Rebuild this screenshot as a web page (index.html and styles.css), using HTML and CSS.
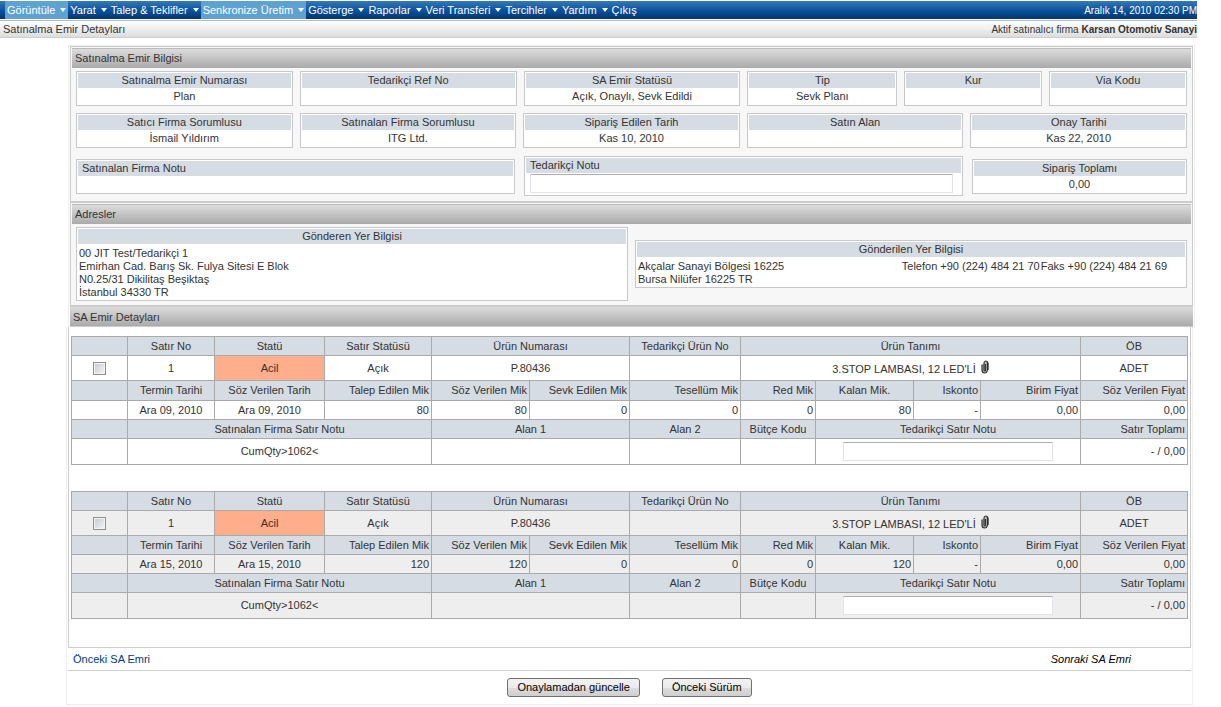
FILE: index.html
```
<!DOCTYPE html>
<html lang="tr">
<head>
<meta charset="utf-8">
<title>Satınalma Emir Detayları</title>
<link rel="stylesheet" href="styles.css">
</head>
<body>
<header class="top">
  <nav class="menu">
    <a class="menu-item active" href="#">Görüntüle<span class="arrow"></span></a>
    <a class="menu-item" href="#">Yarat<span class="arrow"></span></a>
    <a class="menu-item" href="#">Talep &amp; Teklifler<span class="arrow"></span></a>
    <a class="menu-item active" href="#">Senkronize Üretim<span class="arrow"></span></a>
    <a class="menu-item" href="#">Gösterge<span class="arrow"></span></a>
    <a class="menu-item" href="#">Raporlar<span class="arrow"></span></a>
    <a class="menu-item" href="#">Veri Transferi<span class="arrow"></span></a>
    <a class="menu-item" href="#">Tercihler<span class="arrow"></span></a>
    <a class="menu-item" href="#">Yardım<span class="arrow"></span></a>
    <a class="menu-item" href="#">Çıkış</a>
    <span class="date">Aralık 14, 2010 02:30 PM</span>
  </nav>
  <div class="title-bar">
    <h1 class="title">Satınalma Emir Detayları</h1>
    <div class="firm">Aktif satınalıcı firma <b>Karsan Otomotiv Sanayi</b></div>
  </div>
</header>

<main>
  <div class="summary">
    <section class="panel">
      <h2 class="bar">Satınalma Emir Bilgisi</h2>
      <div class="cards row-six">
        <div class="card"><div class="label">Satınalma Emir Numarası</div><div class="value">Plan</div></div>
        <div class="card"><div class="label">Tedarikçi Ref No</div><div class="value"></div></div>
        <div class="card"><div class="label">SA Emir Statüsü</div><div class="value">Açık, Onaylı, Sevk Edildi</div></div>
        <div class="card"><div class="label">Tip</div><div class="value">Sevk Planı</div></div>
        <div class="card"><div class="label">Kur</div><div class="value"></div></div>
        <div class="card"><div class="label">Via Kodu</div><div class="value"></div></div>
      </div>
      <div class="cards row-five">
        <div class="card"><div class="label">Satıcı Firma Sorumlusu</div><div class="value">İsmail Yıldırım</div></div>
        <div class="card"><div class="label">Satınalan Firma Sorumlusu</div><div class="value">ITG Ltd.</div></div>
        <div class="card"><div class="label">Sipariş Edilen Tarih</div><div class="value">Kas 10, 2010</div></div>
        <div class="card"><div class="label">Satın Alan</div><div class="value"></div></div>
        <div class="card"><div class="label">Onay Tarihi</div><div class="value">Kas 22, 2010</div></div>
      </div>
      <div class="cards row-notes">
        <div class="card"><div class="label left">Satınalan Firma Notu</div><div class="value"></div></div>
        <div class="card"><label class="label left" for="note">Tedarikçi Notu</label><div class="note-field"><input class="field" id="note" type="text"></div></div>
        <div class="card"><div class="label">Sipariş Toplamı</div><div class="value">0,00</div></div>
      </div>
    </section>
    <section class="panel">
      <h2 class="bar">Adresler</h2>
      <div class="cards row-address">
        <div class="card">
          <div class="label">Gönderen Yer Bilgisi</div>
          <div class="address"><div>00 JIT Test/Tedarikçi 1<br>Emirhan Cad. Barış Sk. Fulya Sitesi E Blok<br>N0.25/31 Dikilitaş Beşiktaş<br>İstanbul 34330 TR</div></div>
        </div>
        <div class="card">
          <div class="label">Gönderilen Yer Bilgisi</div>
          <div class="address"><div>Akçalar Sanayi Bölgesi 16225<br>Bursa Nilüfer 16225 TR</div><div class="phones"><span>Telefon +90 (224) 484 21 70</span><span>Faks +90 (224) 484 21 69</span></div></div>
        </div>
      </div>
    </section>
    <h2 class="bar details-bar">SA Emir Detayları</h2>
  </div>

  <div class="details">
    <div class="lines">
      <table class="line">
        <colgroup><col class="c56"><col class="c87"><col class="c110"><col class="c107"><col class="c98"><col class="c100"><col class="c111"><col class="c75"><col class="c98"><col class="c67"><col class="c100"><col class="c107"></colgroup>
        <tr class="head"><th></th><th>Satır No</th><th>Statü</th><th>Satır Statüsü</th><th colspan="2">Ürün Numarası</th><th>Tedarikçi Ürün No</th><th colspan="4">Ürün Tanımı</th><th>ÖB</th></tr>
        <tr class="item"><td><input class="check" type="checkbox" aria-label="Satır 1, Ara 09, 2010"></td><td>1</td><td class="urgent">Acil</td><td>Açık</td><td colspan="2">P.80436</td><td></td><td colspan="4"><span class="product">3.STOP LAMBASI, 12 LED'Lİ<svg class="clip" viewBox="0 0 8 14" aria-hidden="true"><path d="M1 4.500V10q0 3 2.500 3t3-3V3Q6.500 1 4.800 1T3 3v7q0 1 .7 1t.8-1V4" fill="#bbb" stroke="#333" stroke-width="1.200"/><path d="M7 2.500V10" stroke="#222" stroke-width="1.200"/></svg></span></td><td>ADET</td></tr>
        <tr class="head tall"><th></th><th>Termin Tarihi</th><th>Söz Verilen Tarih</th><th class="num">Talep Edilen Mik</th><th class="num">Söz Verilen Mik</th><th class="num">Sevk Edilen Mik</th><th class="num">Tesellüm Mik</th><th class="num">Red Mik</th><th>Kalan Mik.</th><th class="num">Iskonto</th><th class="num">Birim Fiyat</th><th class="num">Söz Verilen Fiyat</th></tr>
        <tr class="dates"><td></td><td>Ara 09, 2010</td><td>Ara 09, 2010</td><td class="num">80</td><td class="num">80</td><td class="num">0</td><td class="num">0</td><td class="num">0</td><td class="num">80</td><td class="num">-</td><td class="num">0,00</td><td class="num">0,00</td></tr>
        <tr class="head"><th></th><th colspan="3">Satınalan Firma Satır Notu</th><th colspan="2">Alan 1</th><th>Alan 2</th><th>Bütçe Kodu</th><th colspan="3"><label for="line-note-1">Tedarikçi Satır Notu</label></th><th class="num">Satır Toplamı</th></tr>
        <tr class="notes"><td></td><td colspan="3">CumQty&gt;1062&lt;</td><td colspan="2"></td><td></td><td></td><td colspan="3"><input class="field line-note" id="line-note-1" type="text"></td><td class="num">- / 0,00</td></tr>
      </table>

      <table class="line alt">
        <colgroup><col class="c56"><col class="c87"><col class="c110"><col class="c107"><col class="c98"><col class="c100"><col class="c111"><col class="c75"><col class="c98"><col class="c67"><col class="c100"><col class="c107"></colgroup>
        <tr class="head"><th></th><th>Satır No</th><th>Statü</th><th>Satır Statüsü</th><th colspan="2">Ürün Numarası</th><th>Tedarikçi Ürün No</th><th colspan="4">Ürün Tanımı</th><th>ÖB</th></tr>
        <tr class="item"><td><input class="check" type="checkbox" aria-label="Satır 1, Ara 15, 2010"></td><td>1</td><td class="urgent">Acil</td><td>Açık</td><td colspan="2">P.80436</td><td></td><td colspan="4"><span class="product">3.STOP LAMBASI, 12 LED'Lİ<svg class="clip" viewBox="0 0 8 14" aria-hidden="true"><path d="M1 4.500V10q0 3 2.500 3t3-3V3Q6.500 1 4.800 1T3 3v7q0 1 .7 1t.8-1V4" fill="#bbb" stroke="#333" stroke-width="1.200"/><path d="M7 2.500V10" stroke="#222" stroke-width="1.200"/></svg></span></td><td>ADET</td></tr>
        <tr class="head"><th></th><th>Termin Tarihi</th><th>Söz Verilen Tarih</th><th class="num">Talep Edilen Mik</th><th class="num">Söz Verilen Mik</th><th class="num">Sevk Edilen Mik</th><th class="num">Tesellüm Mik</th><th class="num">Red Mik</th><th>Kalan Mik.</th><th class="num">Iskonto</th><th class="num">Birim Fiyat</th><th class="num">Söz Verilen Fiyat</th></tr>
        <tr class="dates"><td></td><td>Ara 15, 2010</td><td>Ara 15, 2010</td><td class="num">120</td><td class="num">120</td><td class="num">0</td><td class="num">0</td><td class="num">0</td><td class="num">120</td><td class="num">-</td><td class="num">0,00</td><td class="num">0,00</td></tr>
        <tr class="head"><th></th><th colspan="3">Satınalan Firma Satır Notu</th><th colspan="2">Alan 1</th><th>Alan 2</th><th>Bütçe Kodu</th><th colspan="3"><label for="line-note-2">Tedarikçi Satır Notu</label></th><th class="num">Satır Toplamı</th></tr>
        <tr class="notes"><td></td><td colspan="3">CumQty&gt;1062&lt;</td><td colspan="2"></td><td></td><td></td><td colspan="3"><input class="field line-note" id="line-note-2" type="text"></td><td class="num">- / 0,00</td></tr>
      </table>
    </div>
    <div class="pager"><a class="prev" href="#">Önceki SA Emri</a><i class="next">Sonraki SA Emri</i></div>
    <div class="actions"><button class="button" type="button">Onaylamadan güncelle</button><button class="button" type="button">Önceki Sürüm</button></div>
  </div>
</main>
</body>
</html>
```
FILE: styles.css
```
* { box-sizing: border-box; }

body {
  margin: 0;
  padding-top: 1px;
  background: #fff;
  color: #333;
  font: 11px/13px "Liberation Sans", Arial, sans-serif;
}

h1, h2 { margin: 0; font-size: inherit; font-weight: normal; }

/* Top menu and title */
.top { margin-right: 24px; }

.menu {
  display: flex;
  height: 18px;
  padding-left: 5px;
  background: linear-gradient(#3579b9, #0a509b 55%, #00356f);
  white-space: nowrap;
}

.menu-item {
  display: flex;
  align-items: center;
  gap: 5px;
  padding: 0 2px;
  color: #fff;
  text-decoration: none;
}

.menu-item.active { background: #5ea2d3; }

.arrow {
  border: 3px solid transparent;
  border-top: 4px solid #fff;
  border-bottom: 0;
}

.date {
  margin-left: auto;
  color: #fff;
  font-size: 10px;
  line-height: 19px;
}

.title-bar {
  display: flex;
  justify-content: space-between;
  align-items: center;
  height: 18px;
  margin-top: 1px;
  padding-left: 3px;
  border-top: 1px solid #bbb;
  border-bottom: 1px solid #ccc;
  background: linear-gradient(#fff, #ddd);
}

.firm { font-size: 10px; }

/* Order summary */
.summary {
  margin: 7px 26px 0 68px;
  border: 1px solid #eee;
  border-bottom: 0;
  padding: 0 1px;
}

.panel {
  padding: 1px;
  border: 1px solid #ccc;
  border-bottom-width: 2px;
  background: #f7f7f7;
}

.panel + .panel { border-top: 0; }

.bar {
  height: 20px;
  padding-left: 3px;
  border-top: 1px solid #bbb;
  background: linear-gradient(#dcdcdc, #aaa);
  line-height: 19px;
}

.details-bar { border-top: 0; border-bottom: 1px solid #ccc; line-height: 20px; }

.cards {
  display: grid;
  gap: 7px;
  margin: 3px 4px 7px;
}

.row-six { grid-template-columns: 217fr 217fr 217fr 150fr 138fr 138fr; }
.row-five { grid-template-columns: repeat(5, 1fr); }
.row-notes { grid-template-columns: 439fr 439fr 215fr; gap: 9px; align-items: center; margin: 8px 4px 4px; }
.row-address { grid-template-columns: 1fr 1fr; align-items: center; margin-bottom: 3px; }

.card { padding: 1px; border: 1px solid #c8c8c8; background: #fff; }

.label {
  display: block;
  height: 15px;
  background: #d5dce4;
  text-align: center;
  line-height: 15px;
}

.label.left { padding-left: 4px; text-align: left; }

.value { height: 16px; text-align: center; line-height: 17px; }

.note-field { padding: 1px 8px 1px 4px; }

.field {
  display: block;
  width: 100%;
  height: 19px;
  padding: 1px 3px;
  border: 1px solid #e2e3ea;
  border-top-color: #abadb3;
  border-radius: 1px;
  background: #fff;
  font: inherit;
}

.address { display: flex; justify-content: space-between; padding: 3px 0 0 1px; }
.phones { display: flex; gap: 1px; padding-right: 18px; }

/* Order lines */
.details {
  margin: 0 28px 0 66px;
  padding: 0 1px;
  border: 1px solid #eee;
  border-top: 0;
}

.lines {
  padding: 9px 2px 28px;
  border: 1px solid #ccc;
  border-top: 0;
}

.line { width: 100%; table-layout: fixed; border-collapse: collapse; }
.line + .line { margin-top: 26px; }
.line.alt { background: #eee; }

.line th, .line td {
  padding: 0 2px;
  border: 1px solid #aaa;
  font-weight: normal;
  text-align: center;
  white-space: nowrap;
}

.line th.num, .line td.num { text-align: right; }
.line th { background: #d5dce4; }
.line .urgent { background: #ffad8a; }

.head { height: 19px; }
.head.tall { height: 20px; }
.item { height: 25px; }
.dates { height: 19px; }
.notes { height: 26px; }

.c56 { width: 56px; }
.c67 { width: 67px; }
.c75 { width: 75px; }
.c87 { width: 87px; }
.c98 { width: 98px; }
.c100 { width: 100px; }
.c107 { width: 107px; }
.c110 { width: 110px; }
.c111 { width: 111px; }

.check {
  display: block;
  width: 13px;
  height: 13px;
  margin: 0 auto;
  appearance: none;
  border: 1px solid #8e8f8f;
  background: linear-gradient(135deg, #c4c8d0, #f6f6f6);
  box-shadow: inset 0 0 0 1px #f4f4f4;
}

.product { display: inline-flex; align-items: flex-end; gap: 5px; }
.clip { width: 8px; height: 14px; margin-bottom: 2px; }
.line-note { width: 210px; margin: 0 auto; }

/* Footer */
.pager {
  display: flex;
  justify-content: space-between;
  align-items: center;
  height: 23px;
  padding: 0 60px 0 5px;
  border-bottom: 1px solid #ccc;
}

.prev { color: #003d7d; text-decoration: none; }
.next { color: #000; }

.actions { display: flex; justify-content: center; gap: 22px; padding: 7px 0; }

.button {
  height: 19px;
  padding: 0 9px;
  border: 1px solid #707070;
  border-radius: 3px;
  background: linear-gradient(#f2f2f2, #ebebeb 50%, #ddd 50%, #cfcfcf);
  color: #000;
  font: inherit;
}
```
